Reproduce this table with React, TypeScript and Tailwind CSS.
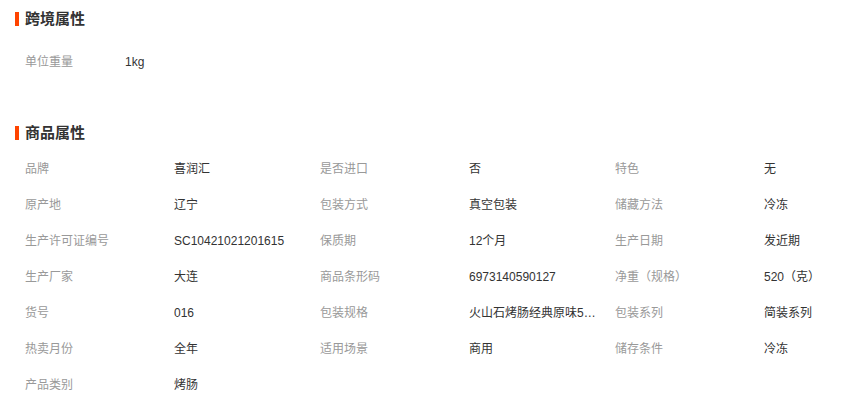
const font = { fontFamily: '"Liberation Sans", "Noto Sans CJK SC", sans-serif' };

const crossBorder = [{ label: "单位重量", value: "1kg" }];

const productAttrs = [
  { label: "品牌", value: "喜润汇" },
  { label: "是否进口", value: "否" },
  { label: "特色", value: "无" },
  { label: "原产地", value: "辽宁" },
  { label: "包装方式", value: "真空包装" },
  { label: "储藏方法", value: "冷冻" },
  { label: "生产许可证编号", value: "SC10421021201615" },
  { label: "保质期", value: "12个月" },
  { label: "生产日期", value: "发近期" },
  { label: "生产厂家", value: "大连" },
  { label: "商品条形码", value: "6973140590127" },
  { label: "净重（规格）", value: "520（克）" },
  { label: "货号", value: "016" },
  { label: "包装规格", value: "火山石烤肠经典原味500g" },
  { label: "包装系列", value: "简装系列" },
  { label: "热卖月份", value: "全年" },
  { label: "适用场景", value: "商用" },
  { label: "储存条件", value: "冷冻" },
  { label: "产品类别", value: "烤肠" },
];

function SectionTitle({ title }: { title: string }) {
  return (
    <div className="flex items-center h-[36px]">
      <span className="w-[4px] h-[14px] bg-[#ff4400] mr-[6px]" />
      <h2 className="text-[15px] font-bold text-[#333]">{title}</h2>
    </div>
  );
}

export default function App() {
  return (
    <div className="w-[867px] h-[398px] bg-white overflow-hidden pl-[15px] pt-[1px]" style={font}>
      {/* 跨境属性 */}
      <section>
        <SectionTitle title="跨境属性" />
        <div className="pt-[7px] pl-[10px]">
          {crossBorder.map((item) => (
            <div key={item.label} className="flex items-center h-[36px] text-[12px]">
              <span className="w-[100px] text-[#999]">{item.label}</span>
              <span className="text-[#333]">{item.value}</span>
            </div>
          ))}
        </div>
      </section>

      {/* 商品属性 */}
      <section className="mt-[35px]">
        <SectionTitle title="商品属性" />
        <div className="grid grid-cols-[295px_295px_295px] pl-[10px]">
          {productAttrs.map((item) => (
            <div key={item.label} className="flex items-center h-[36px] text-[12px]">
              <span className="w-[149px] shrink-0 text-[#999]">{item.label}</span>
              <span className="w-[128px] truncate text-[#333]">{item.value}</span>
            </div>
          ))}
        </div>
      </section>
    </div>
  );
}
